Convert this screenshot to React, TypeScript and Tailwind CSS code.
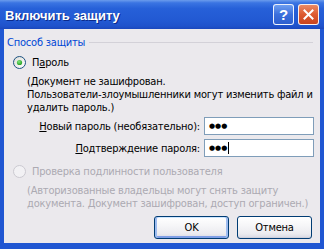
import React from "react";

function Radio({ checked, disabled }: { checked?: boolean; disabled?: boolean }) {
  return (
    <svg width="13" height="13" viewBox="0 0 13 13" className="shrink-0">
      <defs>
        <linearGradient id={disabled ? "rgd" : "rg"} x1="0" y1="0" x2="1" y2="1">
          <stop offset="0" stopColor={disabled ? "#f2f1f4" : "#dcdcd7"} />
          <stop offset="1" stopColor={disabled ? "#f2f1f4" : "#ffffff"} />
        </linearGradient>
        <radialGradient id="dot" cx="0.4" cy="0.35" r="0.7">
          <stop offset="0" stopColor="#7ee87a" />
          <stop offset="1" stopColor="#1f9a1f" />
        </radialGradient>
      </defs>
      <circle
        cx="6.5"
        cy="6.5"
        r="6"
        fill={`url(#${disabled ? "rgd" : "rg"})`}
        stroke={disabled ? "#cbc9d0" : "#1c5180"}
        strokeWidth="1"
      />
      {checked && <circle cx="6.5" cy="6.5" r="2.6" fill="url(#dot)" />}
    </svg>
  );
}

function Btn({ children, def }: { children: React.ReactNode; def?: boolean }) {
  return (
    <div
      className={
        "w-[75px] h-[23px] rounded-[3px] border border-[#003c74] flex items-center justify-center text-black bg-[linear-gradient(to_bottom,#ffffff_0%,#f6f6f8_40%,#ebebef_80%,#d8d8e2_100%)] " +
        (def
          ? "shadow-[inset_2px_0_0_#9ebcef,inset_-2px_0_0_#9ebcef,inset_0_1px_0_#cee7ff,inset_0_-2px_0_#7f9fe6]"
          : "shadow-[inset_0_-1px_0_#cfd0dc]")
      }
    >
      {children}
    </div>
  );
}

export default function App() {
  return (
    <div className="w-[324px] h-[249px] flex flex-col overflow-hidden font-['DejaVu_Sans_Condensed','Liberation_Sans',sans-serif] text-[11px] leading-[13px] tracking-[-0.2px] text-black">
      {/* Title bar */}
      <div className="h-[29px] shrink-0 flex items-center pl-[5px] pr-[5px] bg-[linear-gradient(to_bottom,#6b9cec_0%,#3a74e2_10%,#2660d8_30%,#2259d3_70%,#1f52cb_90%,#1a47bd_100%)]">
        <span className="flex-1 text-white font-bold text-[13px] tracking-normal font-['Liberation_Sans',sans-serif] [text-shadow:1px_1px_0_#0b2a8a] pt-[1px]">
          Включить защиту
        </span>
        <div className="w-[21px] h-[21px] rounded-[3px] border border-white/90 flex items-center justify-center bg-[linear-gradient(to_bottom,#6e9ef0,#3b6fdc_50%,#2d5fcf)]">
          <span className="text-white font-bold text-[15px] leading-none font-['Liberation_Sans',sans-serif]">?</span>
        </div>
        <div className="w-[21px] h-[21px] ml-[4px] rounded-[3px] border border-white/90 flex items-center justify-center bg-[linear-gradient(to_bottom,#ea8a64,#dd5a30_50%,#c9441f)]">
          <svg width="11" height="11" viewBox="0 0 11 11">
            <path d="M1.5 1.5 L9.5 9.5 M9.5 1.5 L1.5 9.5" stroke="white" strokeWidth="2" strokeLinecap="square" />
          </svg>
        </div>
      </div>

      {/* Client */}
      <div className="flex-1 flex flex-col bg-[#ebe9ed] border-x-4 border-b-[6px] border-[#2056d2] pl-[3px] pr-[6px] pt-[7px]">
        <div className="flex items-center h-[13px]">
          <span className="text-[#0046d5]">Способ защиты</span>
          <div className="flex-1 h-px bg-[#d3d1d8] ml-[4px] mr-[1px]" />
        </div>

        <div className="flex items-center h-[13px] mt-[7px] pl-[6px]">
          <Radio checked />
          <span className="ml-[6px]">
            П<span className="underline">а</span>роль
          </span>
        </div>

        <div className="pl-[20px] mt-[6px] whitespace-nowrap">
          <div>(Документ не зашифрован.</div>
          <div>Пользователи-злоумышленники могут изменить файл и</div>
          <div>удалить пароль.)</div>
        </div>

        <div className="flex items-center justify-end mt-[3px]">
          <span>
            <span className="underline">Н</span>овый пароль (необязательно):
          </span>
          <div className="w-[110px] h-[18px] ml-[4px] bg-white border border-[#7f9db9] flex items-center pl-[4px]">
            <span className="font-['DejaVu_Sans',sans-serif] text-[7px] leading-none tracking-normal">●●●</span>
          </div>
        </div>
        <div className="flex items-center justify-end mt-[4px]">
          <span>
            <span className="underline">П</span>одтверждение пароля:
          </span>
          <div className="w-[110px] h-[18px] ml-[4px] bg-white border border-[#7f9db9] flex items-center pl-[4px]">
            <span className="font-['DejaVu_Sans',sans-serif] text-[7px] leading-none tracking-normal">●●●</span>
            <div className="w-px h-[12px] bg-black ml-[1px]" />
          </div>
        </div>

        <div className="flex items-center h-[13px] mt-[8px] pl-[6px] text-[#acaab2]">
          <Radio disabled />
          <span className="ml-[6px]">Проверка подлинности пользователя</span>
        </div>

        <div className="pl-[20px] mt-[6px] whitespace-nowrap text-[#acaab2]">
          <div>(Авторизованные владельцы могут снять защиту</div>
          <div>документа. Документ зашифрован, доступ ограничен.)</div>
        </div>

        <div className="flex justify-end gap-[8px] mt-[6px] mr-[2px]">
          <Btn def>OK</Btn>
          <Btn>Отмена</Btn>
        </div>
      </div>
    </div>
  );
}
